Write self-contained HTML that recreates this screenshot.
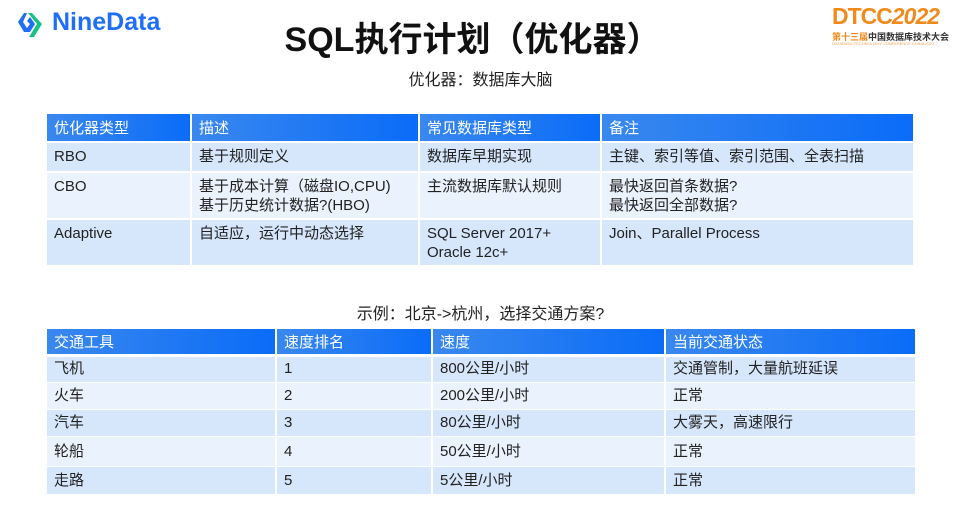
<!DOCTYPE html><html><head><meta charset="utf-8"><style>
body{margin:0;width:961px;height:516px;background:#fff;position:relative;overflow:hidden;font-family:"Liberation Sans","Noto Sans CJK SC",sans-serif;}
.a{position:absolute;}
.h{position:absolute;background:linear-gradient(90deg,#3a88ee,#0a6cf8);color:#fff;font-size:15px;box-sizing:border-box;padding:3px 0 0 7px;}
.c{position:absolute;font-size:15px;color:#222;box-sizing:border-box;padding:4px 0 0 7px;line-height:19px;}
.d{background:#d6e7fc}.l{background:#eaf2fd}
</style></head><body>
<svg class="a" style="left:15px;top:9px" width="30" height="32" viewBox="0 0 30 30"><path d="M9 3 L3 12 L9 22 L15 22 L20 14 L15 7 L12 11 L15 14 L12 18 L8 12 L12 3Z" fill="#1e6ff5"/><path d="M17 3 L27 14 L19 27 L14 27 L22 14 L13 3Z" fill="#19c08a"/></svg>
<div class="a" style="left:52px;top:8px;font-size:25px;font-weight:bold;color:#1e6ff5">NineData</div>
<div class="a" style="left:0;width:945px;top:12px;text-align:center;font-size:34px;font-weight:bold;color:#111">SQL执行计划（优化器）</div>
<div class="a" style="left:0;width:961px;top:66px;text-align:center;font-size:16px;color:#222">优化器：数据库大脑</div>
<div class="a" style="left:832px;top:3px;font-size:23px;color:#f08a1c;font-weight:bold;letter-spacing:-1px">DTCC<span style="font-style:italic">2022</span></div>
<div class="a" style="left:832px;top:30px;font-size:9px;color:#333;font-weight:bold"><span style="color:#f08a1c">第十三届</span>中国数据库技术大会</div>
<div class="a" style="left:832px;top:41px;font-size:4px;color:#f0a050">DATABASE TECHNOLOGY CONFERENCE CHINA 2022</div>

<div class="h" style="left:47px;top:114px;width:143px;height:27px">优化器类型</div>
<div class="h" style="left:192px;top:114px;width:226px;height:27px">描述</div>
<div class="h" style="left:420px;top:114px;width:180px;height:27px">常见数据库类型</div>
<div class="h" style="left:602px;top:114px;width:311px;height:27px">备注</div>

<div class="c d" style="left:47px;top:143px;width:143px;height:28px">RBO</div>
<div class="c d" style="left:192px;top:143px;width:226px;height:28px">基于规则定义</div>
<div class="c d" style="left:420px;top:143px;width:180px;height:28px">数据库早期实现</div>
<div class="c d" style="left:602px;top:143px;width:311px;height:28px">主键、索引等值、索引范围、全表扫描</div>

<div class="c l" style="left:47px;top:173px;width:143px;height:45px">CBO</div>
<div class="c l" style="left:192px;top:173px;width:226px;height:45px">基于成本计算（磁盘IO,CPU)<br>基于历史统计数据?(HBO)</div>
<div class="c l" style="left:420px;top:173px;width:180px;height:45px">主流数据库默认规则</div>
<div class="c l" style="left:602px;top:173px;width:311px;height:45px">最快返回首条数据?<br>最快返回全部数据?</div>

<div class="c d" style="left:47px;top:220px;width:143px;height:45px">Adaptive</div>
<div class="c d" style="left:192px;top:220px;width:226px;height:45px">自适应，运行中动态选择</div>
<div class="c d" style="left:420px;top:220px;width:180px;height:45px">SQL Server 2017+<br>Oracle 12c+</div>
<div class="c d" style="left:602px;top:220px;width:311px;height:45px">Join、Parallel Process</div>

<div class="a" style="left:0;width:961px;top:300px;text-align:center;font-size:16px;color:#222">示例：北京-&gt;杭州，选择交通方案?</div>

<div class="h" style="left:47px;top:329px;width:228px;height:25px;padding-top:2px">交通工具</div>
<div class="h" style="left:277px;top:329px;width:154px;height:25px;padding-top:2px">速度排名</div>
<div class="h" style="left:433px;top:329px;width:231px;height:25px;padding-top:2px">速度</div>
<div class="h" style="left:666px;top:329px;width:249px;height:25px;padding-top:2px">当前交通状态</div>

<div class="c d" style="left:47px;top:357px;width:228px;height:25px;padding-top:2px">飞机</div>
<div class="c d" style="left:277px;top:357px;width:154px;height:25px;padding-top:2px">1</div>
<div class="c d" style="left:433px;top:357px;width:231px;height:25px;padding-top:2px">800公里/小时</div>
<div class="c d" style="left:666px;top:357px;width:249px;height:25px;padding-top:2px">交通管制，大量航班延误</div>

<div class="c l" style="left:47px;top:383px;width:228px;height:26px;padding-top:3px">火车</div>
<div class="c l" style="left:277px;top:383px;width:154px;height:26px;padding-top:3px">2</div>
<div class="c l" style="left:433px;top:383px;width:231px;height:26px;padding-top:3px">200公里/小时</div>
<div class="c l" style="left:666px;top:383px;width:249px;height:26px;padding-top:3px">正常</div>

<div class="c d" style="left:47px;top:410px;width:228px;height:26px;padding-top:3px">汽车</div>
<div class="c d" style="left:277px;top:410px;width:154px;height:26px;padding-top:3px">3</div>
<div class="c d" style="left:433px;top:410px;width:231px;height:26px;padding-top:3px">80公里/小时</div>
<div class="c d" style="left:666px;top:410px;width:249px;height:26px;padding-top:3px">大雾天，高速限行</div>

<div class="c l" style="left:47px;top:437px;width:228px;height:29px;padding-top:5px">轮船</div>
<div class="c l" style="left:277px;top:437px;width:154px;height:29px;padding-top:5px">4</div>
<div class="c l" style="left:433px;top:437px;width:231px;height:29px;padding-top:5px">50公里/小时</div>
<div class="c l" style="left:666px;top:437px;width:249px;height:29px;padding-top:5px">正常</div>

<div class="c d" style="left:47px;top:467px;width:228px;height:27px;padding-top:4px">走路</div>
<div class="c d" style="left:277px;top:467px;width:154px;height:27px;padding-top:4px">5</div>
<div class="c d" style="left:433px;top:467px;width:231px;height:27px;padding-top:4px">5公里/小时</div>
<div class="c d" style="left:666px;top:467px;width:249px;height:27px;padding-top:4px">正常</div>
</body></html>
